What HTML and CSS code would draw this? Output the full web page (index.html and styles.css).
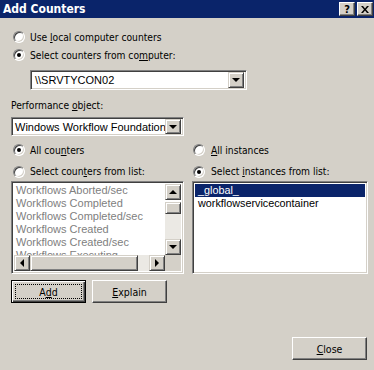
FILE: index.html
```html
<!DOCTYPE html>
<html lang="en">
  <head>
    <meta charset="UTF-8" />
    <title>Add Counters</title>
    <link rel="stylesheet" href="styles.css">
  </head>
  <body>
    <div class="window">
      <!-- Title bar -->
      <div class="titlebar">
        <span class="title">Add Counters</span>
        <div class="caption-buttons">
          <span class="cap-btn">?</span>
          <span class="cap-btn">
            <svg width="8" height="7" viewBox="0 0 8 7"><path d="M0 0h2l2 2.5 2-2.5h2l-3 3.5 3 3.5h-2l-2-2.5-2 2.5h-2l3-3.5z" fill="#000"/></svg>
          </span>
        </div>
      </div>

      <div class="content">
        <div class="radio-row"><span class="radio"></span><span>Use <u>l</u>ocal computer counters</span></div>
        <div class="radio-row"><span class="radio checked"></span><span>Select counters from co<u>m</u>puter:</span></div>

        <div class="combo combo-computer">
          <span class="combo-text">\\SRVTYCON02</span>
          <span class="arrow-btn"><span class="tri-down"></span></span>
        </div>

        <div class="label-row"><span>Performance <u>o</u>bject:</span></div>
        <div class="combo combo-object">
          <span class="combo-text">Windows Workflow Foundation</span>
          <span class="arrow-btn"><span class="tri-down"></span></span>
        </div>

        <div class="columns">
          <div class="col">
            <div class="radio-row"><span class="radio checked"></span><span>All cou<u>n</u>ters</span></div>
            <div class="radio-row second"><span class="radio"></span><span>Select coun<u>t</u>ers from list:</span></div>
            <div class="listbox counters">
              <div class="list-area">
                <div class="list-items disabled">
                  <div>Workflows Aborted/sec</div>
                  <div>Workflows Completed</div>
                  <div>Workflows Completed/sec</div>
                  <div>Workflows Created</div>
                  <div>Workflows Created/sec</div>
                  <div>Workflows Executing</div>
                </div>
                <div class="vscroll">
                  <span class="sb-btn"><span class="tri-up"></span></span>
                  <span class="sb-thumb v"></span>
                  <span class="sb-track"></span>
                  <span class="sb-btn"><span class="tri-down"></span></span>
                </div>
              </div>
              <div class="hscroll">
                <span class="sb-btn"><span class="tri-left"></span></span>
                <span class="sb-thumb h"></span>
                <span class="sb-track"></span>
                <span class="sb-btn"><span class="tri-right"></span></span>
                <span class="sb-corner"></span>
              </div>
            </div>
          </div>

          <div class="col right">
            <div class="radio-row"><span class="radio"></span><span><u>A</u>ll instances</span></div>
            <div class="radio-row second"><span class="radio checked"></span><span>Select <u>i</u>nstances from list:</span></div>
            <div class="listbox instances">
              <div class="list-items">
                <div class="selected">_global_</div>
                <div>workflowservicecontainer</div>
              </div>
            </div>
          </div>
        </div>

        <div class="button-row">
          <button class="btn default"><span class="focus-rect"><span>A<u>d</u>d</span></span></button>
          <button class="btn"><span><u>E</u>xplain</span></button>
        </div>

        <div class="footer">
          <button class="btn"><span><u>C</u>lose</span></button>
        </div>
      </div>
    </div>
  </body>
</html>
```

FILE: styles.css
```css
/* Classic dialog look */
* {
  margin: 0;
  padding: 0;
  box-sizing: border-box;
}

body {
  background: #d4d0c8;
  font-family: "DejaVu Sans Condensed", "DejaVu Sans", sans-serif;
  font-size: 10.2px;
  color: #000;
}

.window {
  width: 374px;
  height: 370px;
  background: #d4d0c8;
  display: flex;
  flex-direction: column;
}

.titlebar {
  height: 18px;
  background: #0a246a;
  display: flex;
  align-items: center;
  justify-content: space-between;
  padding: 0 1px 0 3px;
}

.title {
  color: #fff;
  font-weight: bold;
  font-size: 12px;
  font-family: "DejaVu Sans Condensed", "DejaVu Sans", sans-serif;
}

.caption-buttons {
  display: flex;
  gap: 2px;
}

.cap-btn {
  width: 16px;
  height: 14px;
  background: #d4d0c8;
  border: 1px solid;
  border-color: #fff #404040 #404040 #fff;
  box-shadow: inset -1px -1px #808080;
  display: flex;
  align-items: center;
  justify-content: center;
  font-weight: bold;
  font-size: 11px;
  line-height: 1;
}

.content {
  flex: 1;
  display: flex;
  flex-direction: column;
  padding: 10px 7px 0 11px;
}

.radio-row {
  height: 18px;
  display: flex;
  align-items: center;
  padding-left: 2px;
  white-space: nowrap;
}

.radio {
  width: 12px;
  height: 12px;
  border-radius: 50%;
  border: 1px solid;
  border-color: #808080 #fff #fff #808080;
  box-shadow: inset 1px 1px #404040, inset -1px -1px #d4d0c8;
  background: #fff;
  margin-right: 5px;
  display: flex;
  align-items: center;
  justify-content: center;
  flex-shrink: 0;
}

.radio.checked::after {
  content: "";
  width: 4px;
  height: 4px;
  border-radius: 50%;
  background: #000;
}

/* sunken field */
.combo,
.listbox {
  background: #fff;
  border: 1px solid;
  border-color: #808080 #fff #fff #808080;
  box-shadow: inset 1px 1px #404040, inset -1px -1px #d4d0c8;
  padding: 2px;
}

.combo {
  display: flex;
  align-items: center;
  height: 20px;
}

.combo-text {
  flex: 1;
  font-family: "Liberation Sans", "DejaVu Sans", sans-serif;
  font-size: 11px;
  padding-left: 2px;
  white-space: nowrap;
  overflow: hidden;
}

.combo-computer {
  width: 217px;
  margin: 6px 0 0 19px;
}

.label-row {
  height: 18px;
  margin-top: 6px;
  display: flex;
  align-items: center;
}

.combo-object {
  width: 173px;
  height: 19px;
  margin-top: 3px;
}

.combo-object .combo-text {
  padding-left: 1px;
}

.arrow-btn,
.sb-btn {
  width: 16px;
  height: 16px;
  background: #d4d0c8;
  border: 1px solid;
  border-color: #d4d0c8 #404040 #404040 #d4d0c8;
  box-shadow: inset 1px 1px #fff, inset -1px -1px #808080;
  display: flex;
  align-items: center;
  justify-content: center;
  flex-shrink: 0;
}

.combo-object .arrow-btn {
  height: 15px;
}

.tri-down,
.tri-up,
.tri-left,
.tri-right {
  width: 0;
  height: 0;
  border: 4px solid transparent;
}

.tri-down {
  border-top-color: #000;
  border-bottom-width: 0;
}

.tri-up {
  border-bottom-color: #000;
  border-top-width: 0;
}

.tri-left {
  border-right-color: #000;
  border-left-width: 0;
}

.tri-right {
  border-left-color: #000;
  border-right-width: 0;
}

.columns {
  display: grid;
  grid-template-columns: 173px 176px;
  column-gap: 8px;
  margin-top: 5px;
}

.col .second {
  margin-top: 4px;
  height: 17px;
}

.col.right .radio-row {
  padding-left: 1px;
}

.col.right .radio {
  margin-right: 6px;
}

.listbox {
  height: 93px;
  margin-top: 1px;
  display: flex;
  flex-direction: column;
}

.list-area {
  flex: 1;
  display: flex;
  min-height: 0;
}

.list-items {
  flex: 1;
  overflow: hidden;
  font-family: "Liberation Sans", "DejaVu Sans", sans-serif;
  font-size: 11px;
  line-height: 13px;
}

.list-items div {
  padding-left: 2px;
  white-space: nowrap;
}

.list-items.disabled {
  color: #808080;
}

.instances .list-items div {
  padding-left: 3px;
  font-size: 10.8px;
}

.list-items .selected {
  background: #0a246a;
  color: #fff;
}

.vscroll {
  width: 16px;
  display: flex;
  flex-direction: column;
}

.sb-track {
  flex: 1;
  background: #ebe9e4;
}

.sb-thumb {
  background: #d4d0c8;
  border: 1px solid;
  border-color: #d4d0c8 #404040 #404040 #d4d0c8;
  box-shadow: inset 1px 1px #fff, inset -1px -1px #808080;
}

.sb-thumb.v {
  height: 12px;
  margin-top: 2px;
}

.hscroll {
  height: 16px;
  display: flex;
}

.sb-thumb.h {
  width: 108px;
}

.sb-corner {
  width: 16px;
  background: #d4d0c8;
}

.button-row {
  display: flex;
  gap: 6px;
  margin-top: 6px;
}

.btn {
  width: 75px;
  height: 23px;
  background: #d4d0c8;
  border: 1px solid;
  border-color: #fff #404040 #404040 #fff;
  box-shadow: inset -1px -1px #808080;
  font-family: "DejaVu Sans Condensed", "DejaVu Sans", sans-serif;
  font-size: 10.5px;
  color: #000;
  display: flex;
  align-items: center;
  justify-content: center;
}

.btn.default {
  border: 1px solid #000;
  box-shadow: inset 1px 1px #fff, inset -1px -1px #404040, inset -2px -2px #808080;
  padding: 3px;
}

.focus-rect {
  flex: 1;
  align-self: stretch;
  border: 1px dotted #000;
  display: flex;
  align-items: center;
  justify-content: center;
}

.footer {
  display: flex;
  justify-content: flex-end;
  margin-top: 34px;
}
```
